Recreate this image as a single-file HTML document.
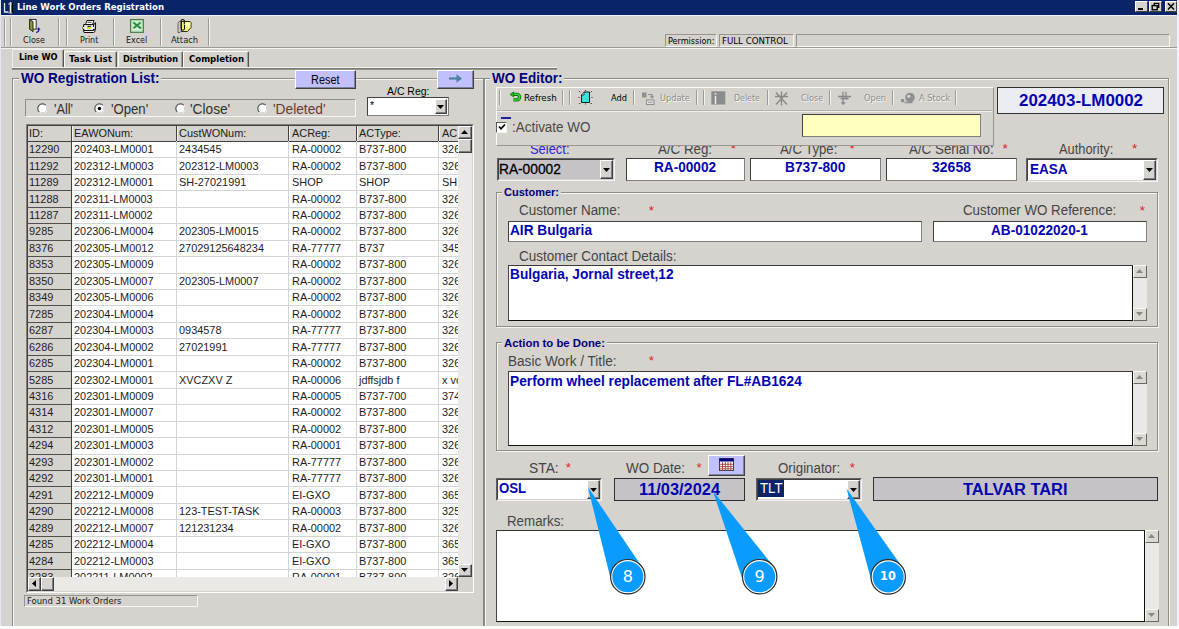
<!DOCTYPE html>
<html lang="en"><head><meta charset="utf-8"><title>Line Work Orders Registration</title>
<style>
html,body{margin:0;padding:0;}
body{width:1179px;height:629px;overflow:hidden;background:#d6d3ce;position:relative;font-family:"Liberation Sans",sans-serif;}
div,span,svg{position:absolute;box-sizing:border-box;}
span{white-space:pre;transform-origin:0 0;}
.sk{border:1px solid;border-color:#96948f #f8f8f6 #f8f8f6 #96948f;}
.rs{border:1px solid;border-color:#fff #808080 #808080 #fff;}
.et{border:1px solid #8e8c88;box-shadow:1px 1px 0 #f6f5f3, inset 1px 1px 0 #f6f5f3;}
.fld{border:1px solid;border-color:#404040 #808080 #808080 #404040;background:#fff;}
.btn{background:#d6d3ce;border:1px solid;border-color:#fff #404040 #404040 #fff;box-shadow:inset -1px -1px 0 #808080;}
.vs{width:1px;border-left:1px solid #808080;border-right:1px solid #fff;width:2px;}
</style></head><body>
<div style="left:0px;top:0px;width:1179px;height:15px;background:#0a246a;"></div>
<div style="left:0px;top:15px;width:1179px;height:1px;background:#f0f4fa;"></div>
<div style="left:0px;top:0px;width:1px;height:629px;background:#dfe3ee;"></div>
<div style="left:1177px;top:0px;width:2px;height:629px;background:#eef0f6;"></div>
<svg style="left:2px;top:1px" width="13" height="13" viewBox="0 0 13 13"><rect x="1" y="1" width="11" height="11" fill="#0a246a"/><path d="M2.5 2v9h4" stroke="#e8e8e8" stroke-width="1.3" fill="none"/><path d="M8.5 1v11" stroke="#f0f0f0" stroke-width="1.6"/><path d="M6 3h5M6.5 12h4" stroke="#c0c0c0" stroke-width="1"/><path d="M10.5 2v10" stroke="#000" stroke-width="1"/></svg>
<span style="left:17.00px;top:2.79px;font-size:9.00px;line-height:9.00px;color:#fff;font-family:'DejaVu Sans','Liberation Sans',sans-serif;font-weight:bold;transform:scaleX(0.9540);">Line Work Orders Registration</span>
<div style="left:1135px;top:1px;width:13px;height:11px;background:#d6d3ce;border:1px solid;border-color:#fff #404040 #404040 #fff;"></div>
<div style="left:1138px;top:8px;width:5px;height:2px;background:#000;"></div>
<div style="left:1149px;top:1px;width:13px;height:11px;background:#d6d3ce;border:1px solid;border-color:#fff #404040 #404040 #fff;"></div>
<svg style="left:1149px;top:1px" width="13" height="11" viewBox="0 0 13 11"><path d="M5.3 2.400h4.400v4h-1.300M5.300 2v2" stroke="#000" stroke-width="1.4" fill="none"/><rect x="3.2" y="4.6" width="5" height="4.2" stroke="#000" stroke-width="1.4" fill="none"/></svg>
<div style="left:1165px;top:1px;width:12px;height:11px;background:#d6d3ce;border:1px solid;border-color:#fff #404040 #404040 #fff;"></div>
<svg style="left:1165px;top:1px" width="12" height="11" viewBox="0 0 12 11"><path d="M3 2.200l6 6.200M9 2.200l-6 6.200" stroke="#000" stroke-width="1.5" fill="none"/></svg>
<div style="left:3.5px;top:18px;width:2px;height:28px;border-left:1px solid #9c9a94;border-right:1px solid #f4f3f0;"></div>
<div style="left:10.2px;top:18px;width:2px;height:28px;border-left:1px solid #9c9a94;border-right:1px solid #f4f3f0;"></div>
<div style="left:58px;top:18px;width:2px;height:28px;border-left:1px solid #9c9a94;border-right:1px solid #f4f3f0;"></div>
<div style="left:65.5px;top:18px;width:2px;height:28px;border-left:1px solid #9c9a94;border-right:1px solid #f4f3f0;"></div>
<div style="left:112.5px;top:18px;width:2px;height:28px;border-left:1px solid #9c9a94;border-right:1px solid #f4f3f0;"></div>
<div style="left:160px;top:18px;width:2px;height:28px;border-left:1px solid #9c9a94;border-right:1px solid #f4f3f0;"></div>
<div style="left:208px;top:18px;width:2px;height:28px;border-left:1px solid #9c9a94;border-right:1px solid #f4f3f0;"></div>
<div style="left:1px;top:46.7px;width:1176px;height:2px;border-top:1px solid #9c9a94;border-bottom:1px solid #f4f3f0;"></div>
<span style="left:23.00px;top:35.90px;font-size:9.10px;line-height:9.10px;color:#181818;font-family:'DejaVu Sans Condensed','DejaVu Sans',sans-serif;transform:scaleX(0.9908);">Close</span>
<span style="left:79.70px;top:35.90px;font-size:9.10px;line-height:9.10px;color:#181818;font-family:'DejaVu Sans Condensed','DejaVu Sans',sans-serif;transform:scaleX(0.9727);">Print</span>
<span style="left:126.00px;top:35.90px;font-size:9.10px;line-height:9.10px;color:#181818;font-family:'DejaVu Sans Condensed','DejaVu Sans',sans-serif;transform:scaleX(0.9829);">Excel</span>
<span style="left:170.50px;top:35.90px;font-size:9.10px;line-height:9.10px;color:#181818;font-family:'DejaVu Sans Condensed','DejaVu Sans',sans-serif;transform:scaleX(1.0240);">Attach</span>
<svg style="left:0;top:16px" width="220" height="20" viewBox="0 16 220 20"><path d="M29.6 19.4h6.600v9.800h-6.600z" fill="#fcfcf8" stroke="#2a2a2a" stroke-width="1"/><path d="M29.600 19.400l3.400 2.300v10l-3.400-2.600z" fill="#8c9c1c" stroke="#2a2a2a" stroke-width="1"/><path d="M36 32.300c2.300 0 3-1.200 2.600-3.300" fill="none" stroke="#2018a0" stroke-width="1.300"/><path d="M36.700 29.600l2-2.300 1.900 2.500z" fill="#2018a0"/><path d="M85.500 24.500l1.500-4h7l-1.500 4z" fill="#fff" stroke="#101010" stroke-width="1"/><path d="M87.500 22.300h4" stroke="#303030" stroke-width=".9"/><path d="M84 24.500h9.500l2-1.500v6l-2 1.500h-9.500q-1.700-3 0-6z" fill="#e4e4e4" stroke="#101010" stroke-width="1.100"/><path d="M93.500 24.500v6" stroke="#101010" stroke-width="1"/><rect x="83" y="27" width="11" height="1.800" fill="#f4f4f4"/><rect x="87" y="26.800" width="3.600" height="2" fill="#c8e000"/><path d="M87.500 26.300h3.500" stroke="#101010" stroke-width="1"/><path d="M83.500 30.500h10l1.500-1v2l-1.500 1h-9.500z" fill="#fff" stroke="#101010" stroke-width="1"/><rect x="130.600" y="19.600" width="12.700" height="12.700" fill="#d8f8d8" stroke="#4c7c4c" stroke-width="1.300"/><rect x="132" y="21" width="9.900" height="9.900" fill="none" stroke="#a8d8a8" stroke-width=".8"/><path d="M133.300 22.500l7.600 5.800M140.500 22.500l-7 5.800" stroke="#2c9040" stroke-width="2.100"/><path d="M178 22.500l1.500-1h2v9.500l-1.500 1.500h-2z" fill="#c8c8b8" stroke="#505040" stroke-width=".8"/><path d="M181.500 21.500h8.500l1 1v5l-3.500 4h-6z" fill="#f8f870" stroke="#282820" stroke-width="1"/><path d="M185 24h5.500M185 26.200h5.500" stroke="#fcfcd0" stroke-width="1.300"/><path d="M184.300 24.500v-4.200q-1.600-1.700-3.200 0v8.700q1.600 2.400 3.400 0v-4" fill="none" stroke="#101010" stroke-width="1.100"/></svg>
<div class="sk" style="left:664.5px;top:34px;width:52px;height:13px;"></div>
<div class="sk" style="left:719px;top:34px;width:75px;height:13px;"></div>
<div class="sk" style="left:796px;top:34px;width:373.5px;height:13px;"></div>
<span style="left:667.50px;top:36.97px;font-size:8.90px;line-height:8.90px;color:#000;font-family:'DejaVu Sans Condensed','DejaVu Sans',sans-serif;transform:scaleX(1.0144);">Permission:</span>
<span style="left:722.00px;top:36.97px;font-size:8.90px;line-height:8.90px;color:#000;font-family:'DejaVu Sans Condensed','DejaVu Sans',sans-serif;transform:scaleX(1.0816);">FULL CONTROL</span>
<div style="left:64.3px;top:50.6px;width:53.2px;height:18px;border:1px solid;border-color:#fbfbfa #55534e transparent #fbfbfa;border-bottom:0;border-radius:2px 2px 0 0;box-shadow:inset -1px 0 0 #a09e98;"></div>
<div style="left:117.8px;top:50.6px;width:65.2px;height:18px;border:1px solid;border-color:#fbfbfa #55534e transparent #fbfbfa;border-bottom:0;border-radius:2px 2px 0 0;box-shadow:inset -1px 0 0 #a09e98;"></div>
<div style="left:183.3px;top:50.6px;width:65.7px;height:18px;border:1px solid;border-color:#fbfbfa #55534e transparent #fbfbfa;border-bottom:0;border-radius:2px 2px 0 0;box-shadow:inset -1px 0 0 #a09e98;"></div>
<div style="left:12.3px;top:49px;width:51.7px;height:19.5px;background:#d6d3ce;border:1px solid;border-color:#f0efec #55534e transparent #f0efec;border-bottom:0;border-radius:2px 2px 0 0;box-shadow:inset -1px 0 0 #a09e98;"></div>
<div style="left:12px;top:67px;width:545px;height:1px;background:#f2f1ee;"></div>
<div style="left:12px;top:68px;width:545px;height:1px;background:#7c7a76;"></div>
<div style="left:12px;top:69px;width:545px;height:1px;background:#94928e;"></div>
<span style="left:18.50px;top:53.09px;font-size:9.00px;line-height:9.00px;color:#000;font-family:'DejaVu Sans','Liberation Sans',sans-serif;font-weight:bold;transform:scaleX(0.9157);">Line WO</span>
<span style="left:68.50px;top:54.99px;font-size:9.00px;line-height:9.00px;color:#000;font-family:'DejaVu Sans','Liberation Sans',sans-serif;font-weight:bold;transform:scaleX(0.9771);">Task List</span>
<span style="left:122.50px;top:54.99px;font-size:9.00px;line-height:9.00px;color:#000;font-family:'DejaVu Sans','Liberation Sans',sans-serif;font-weight:bold;transform:scaleX(0.9081);">Distribution</span>
<span style="left:188.50px;top:54.99px;font-size:9.00px;line-height:9.00px;color:#000;font-family:'DejaVu Sans','Liberation Sans',sans-serif;font-weight:bold;transform:scaleX(0.9520);">Completion</span>
<div class="et" style="left:12px;top:78px;width:472px;height:560px;"></div>
<div style="left:18.5px;top:77px;width:142px;height:4px;background:#d6d3ce;"></div>
<span style="left:20.50px;top:70.60px;font-size:14.30px;line-height:14.30px;color:#000080;font-weight:bold;transform:scaleX(0.9475);">WO Registration List:</span>
<div style="left:295px;top:70px;width:61px;height:18.6px;background:#c0c0ff;border:1px solid;border-color:#fff #404040 #404040 #fff;box-shadow:inset -1px -1px 0 #8080a0;"></div>
<span style="left:311.00px;top:73.84px;font-size:12.00px;line-height:12.00px;color:#000;transform:scaleX(0.9092);">Reset</span>
<div style="left:437px;top:70px;width:37px;height:18.6px;background:#c0c0ff;border:1px solid;border-color:#fff #404040 #404040 #fff;box-shadow:inset -1px -1px 0 #8080a0;"></div>
<svg style="left:448px;top:73px" width="16" height="11" viewBox="0 0 16 11"><path d="M1 5.5h9" stroke="#5080a0" stroke-width="2.2"/><path d="M8.5 1.2l5.5 4.3-5.5 4.3z" fill="#5080a0"/></svg>
<div class="sk" style="left:24.5px;top:99px;width:331px;height:18px;border-color:#908e88 #f8f8f6 #f8f8f6 #908e88;"></div>
<svg style="left:37px;top:102.5px" width="11" height="11" viewBox="0 0 11 11"><circle cx="5.5" cy="5.5" r="4.6" fill="#fff" stroke="#808080" stroke-width="1"/><path d="M2.2 8.8A4.6 4.6 0 0 1 8.8 2.2" fill="none" stroke="#606060" stroke-width="1.1"/><path d="M8.8 2.2A4.6 4.6 0 0 1 2.2 8.8" fill="none" stroke="#f4f4f4" stroke-width="1.1"/></svg>
<svg style="left:94.3px;top:102.5px" width="11" height="11" viewBox="0 0 11 11"><circle cx="5.5" cy="5.5" r="4.6" fill="#fff" stroke="#808080" stroke-width="1"/><path d="M2.2 8.8A4.6 4.6 0 0 1 8.8 2.2" fill="none" stroke="#606060" stroke-width="1.1"/><path d="M8.8 2.2A4.6 4.6 0 0 1 2.2 8.8" fill="none" stroke="#f4f4f4" stroke-width="1.1"/><circle cx="5.5" cy="5.5" r="1.7" fill="#000"/></svg>
<svg style="left:175.3px;top:102.5px" width="11" height="11" viewBox="0 0 11 11"><circle cx="5.5" cy="5.5" r="4.6" fill="#fff" stroke="#808080" stroke-width="1"/><path d="M2.2 8.8A4.6 4.6 0 0 1 8.8 2.2" fill="none" stroke="#606060" stroke-width="1.1"/><path d="M8.8 2.2A4.6 4.6 0 0 1 2.2 8.8" fill="none" stroke="#f4f4f4" stroke-width="1.1"/></svg>
<svg style="left:257px;top:102.5px" width="11" height="11" viewBox="0 0 11 11"><circle cx="5.5" cy="5.5" r="4.6" fill="#fff" stroke="#808080" stroke-width="1"/><path d="M2.2 8.8A4.6 4.6 0 0 1 8.8 2.2" fill="none" stroke="#606060" stroke-width="1.1"/><path d="M8.8 2.2A4.6 4.6 0 0 1 2.2 8.8" fill="none" stroke="#f4f4f4" stroke-width="1.1"/></svg>
<span style="left:53.60px;top:101.55px;font-size:14.00px;line-height:14.00px;color:#303030;transform:scaleX(0.9089);">&#x27;All&#x27;</span>
<span style="left:110.80px;top:101.55px;font-size:14.00px;line-height:14.00px;color:#303030;transform:scaleX(0.9395);">&#x27;Open&#x27;</span>
<span style="left:190.30px;top:101.55px;font-size:14.00px;line-height:14.00px;color:#303030;transform:scaleX(0.9772);">&#x27;Close&#x27;</span>
<span style="left:272.80px;top:101.55px;font-size:14.00px;line-height:14.00px;color:#6c3838;transform:scaleX(0.9795);">&#x27;Deleted&#x27;</span>
<span style="left:386.50px;top:85.89px;font-size:11.00px;line-height:11.00px;color:#000;transform:scaleX(0.9523);">A/C Reg:</span>
<div class="fld" style="left:367px;top:97px;width:81.5px;height:18.6px;"></div>
<span style="left:369.80px;top:99.99px;font-size:11.00px;line-height:11.00px;color:#000;transform:scaleX(0.9550);">*</span>
<div style="left:434.5px;top:99px;width:12.5px;height:14.5px;background:#d6d3ce;border:1px solid;border-color:#fff #404040 #404040 #fff;box-shadow:inset -1px -1px 0 #808080;"></div>
<svg style="left:437.25px;top:104.75px" width="7" height="4" viewBox="0 0 7 4"><path d="M0 0h7l-3.5 4z" fill="#000"/></svg>
<div style="left:26px;top:124px;width:448px;height:469px;background:#fff;border:1px solid;border-color:#808080 #fff #fff #808080;"></div>
<div style="left:27px;top:125px;width:446px;height:467px;border:1px solid;border-color:#404040 #d6d3ce #d6d3ce #404040;"></div>
<div style="left:0;top:0;width:458.2px;height:577px;overflow:hidden;">
<div style="left:27.5px;top:125.5px;width:430.7px;height:16.4px;background:#d6d3ce;border-bottom:1px solid #404040;"></div>
<div style="left:27.5px;top:142.4px;width:44px;height:435.6px;background:#d6d3ce;border-right:1px solid #404040;"></div>
<div style="left:72px;top:157.355px;width:386.2px;height:1px;background:#d4d4d4;"></div>
<div style="left:27.5px;top:157.355px;width:43.5px;height:1px;background:#505050;"></div>
<div style="left:72px;top:173.81px;width:386.2px;height:1px;background:#d4d4d4;"></div>
<div style="left:27.5px;top:173.81px;width:43.5px;height:1px;background:#505050;"></div>
<div style="left:72px;top:190.265px;width:386.2px;height:1px;background:#d4d4d4;"></div>
<div style="left:27.5px;top:190.265px;width:43.5px;height:1px;background:#505050;"></div>
<div style="left:72px;top:206.72px;width:386.2px;height:1px;background:#d4d4d4;"></div>
<div style="left:27.5px;top:206.72px;width:43.5px;height:1px;background:#505050;"></div>
<div style="left:72px;top:223.175px;width:386.2px;height:1px;background:#d4d4d4;"></div>
<div style="left:27.5px;top:223.175px;width:43.5px;height:1px;background:#505050;"></div>
<div style="left:72px;top:239.63px;width:386.2px;height:1px;background:#d4d4d4;"></div>
<div style="left:27.5px;top:239.63px;width:43.5px;height:1px;background:#505050;"></div>
<div style="left:72px;top:256.085px;width:386.2px;height:1px;background:#d4d4d4;"></div>
<div style="left:27.5px;top:256.085px;width:43.5px;height:1px;background:#505050;"></div>
<div style="left:72px;top:272.54px;width:386.2px;height:1px;background:#d4d4d4;"></div>
<div style="left:27.5px;top:272.54px;width:43.5px;height:1px;background:#505050;"></div>
<div style="left:72px;top:288.995px;width:386.2px;height:1px;background:#d4d4d4;"></div>
<div style="left:27.5px;top:288.995px;width:43.5px;height:1px;background:#505050;"></div>
<div style="left:72px;top:305.45px;width:386.2px;height:1px;background:#d4d4d4;"></div>
<div style="left:27.5px;top:305.45px;width:43.5px;height:1px;background:#505050;"></div>
<div style="left:72px;top:321.905px;width:386.2px;height:1px;background:#d4d4d4;"></div>
<div style="left:27.5px;top:321.905px;width:43.5px;height:1px;background:#505050;"></div>
<div style="left:72px;top:338.36px;width:386.2px;height:1px;background:#d4d4d4;"></div>
<div style="left:27.5px;top:338.36px;width:43.5px;height:1px;background:#505050;"></div>
<div style="left:72px;top:354.815px;width:386.2px;height:1px;background:#d4d4d4;"></div>
<div style="left:27.5px;top:354.815px;width:43.5px;height:1px;background:#505050;"></div>
<div style="left:72px;top:371.27px;width:386.2px;height:1px;background:#d4d4d4;"></div>
<div style="left:27.5px;top:371.27px;width:43.5px;height:1px;background:#505050;"></div>
<div style="left:72px;top:387.725px;width:386.2px;height:1px;background:#d4d4d4;"></div>
<div style="left:27.5px;top:387.725px;width:43.5px;height:1px;background:#505050;"></div>
<div style="left:72px;top:404.18px;width:386.2px;height:1px;background:#d4d4d4;"></div>
<div style="left:27.5px;top:404.18px;width:43.5px;height:1px;background:#505050;"></div>
<div style="left:72px;top:420.635px;width:386.2px;height:1px;background:#d4d4d4;"></div>
<div style="left:27.5px;top:420.635px;width:43.5px;height:1px;background:#505050;"></div>
<div style="left:72px;top:437.09px;width:386.2px;height:1px;background:#d4d4d4;"></div>
<div style="left:27.5px;top:437.09px;width:43.5px;height:1px;background:#505050;"></div>
<div style="left:72px;top:453.545px;width:386.2px;height:1px;background:#d4d4d4;"></div>
<div style="left:27.5px;top:453.545px;width:43.5px;height:1px;background:#505050;"></div>
<div style="left:72px;top:470px;width:386.2px;height:1px;background:#d4d4d4;"></div>
<div style="left:27.5px;top:470px;width:43.5px;height:1px;background:#505050;"></div>
<div style="left:72px;top:486.455px;width:386.2px;height:1px;background:#d4d4d4;"></div>
<div style="left:27.5px;top:486.455px;width:43.5px;height:1px;background:#505050;"></div>
<div style="left:72px;top:502.91px;width:386.2px;height:1px;background:#d4d4d4;"></div>
<div style="left:27.5px;top:502.91px;width:43.5px;height:1px;background:#505050;"></div>
<div style="left:72px;top:519.365px;width:386.2px;height:1px;background:#d4d4d4;"></div>
<div style="left:27.5px;top:519.365px;width:43.5px;height:1px;background:#505050;"></div>
<div style="left:72px;top:535.82px;width:386.2px;height:1px;background:#d4d4d4;"></div>
<div style="left:27.5px;top:535.82px;width:43.5px;height:1px;background:#505050;"></div>
<div style="left:72px;top:552.275px;width:386.2px;height:1px;background:#d4d4d4;"></div>
<div style="left:27.5px;top:552.275px;width:43.5px;height:1px;background:#505050;"></div>
<div style="left:72px;top:568.73px;width:386.2px;height:1px;background:#d4d4d4;"></div>
<div style="left:27.5px;top:568.73px;width:43.5px;height:1px;background:#505050;"></div>
<div style="left:72px;top:585.185px;width:386.2px;height:1px;background:#d4d4d4;"></div>
<div style="left:27.5px;top:585.185px;width:43.5px;height:1px;background:#505050;"></div>
<div style="left:175.5px;top:141.4px;width:1px;height:435.6px;background:#d4d4d4;"></div>
<div style="left:175.5px;top:125.5px;width:1px;height:15.9px;background:#404040;"></div>
<div style="left:176.5px;top:125.5px;width:1px;height:15.9px;background:#f4f4f4;"></div>
<div style="left:287.8px;top:141.4px;width:1px;height:435.6px;background:#d4d4d4;"></div>
<div style="left:287.8px;top:125.5px;width:1px;height:15.9px;background:#404040;"></div>
<div style="left:288.8px;top:125.5px;width:1px;height:15.9px;background:#f4f4f4;"></div>
<div style="left:355.5px;top:141.4px;width:1px;height:435.6px;background:#d4d4d4;"></div>
<div style="left:355.5px;top:125.5px;width:1px;height:15.9px;background:#404040;"></div>
<div style="left:356.5px;top:125.5px;width:1px;height:15.9px;background:#f4f4f4;"></div>
<div style="left:438.1px;top:141.4px;width:1px;height:435.6px;background:#d4d4d4;"></div>
<div style="left:438.1px;top:125.5px;width:1px;height:15.9px;background:#404040;"></div>
<div style="left:439.1px;top:125.5px;width:1px;height:15.9px;background:#f4f4f4;"></div>
<div style="left:70.5px;top:125.5px;width:1px;height:15.9px;background:#404040;"></div>
<div style="left:71.5px;top:125.5px;width:1px;height:15.9px;background:#f4f4f4;"></div>
<span style="left:28.50px;top:127.89px;font-size:11.00px;line-height:11.00px;color:#202020;transform:scaleX(0.9920);">ID:</span>
<span style="left:73.60px;top:127.89px;font-size:11.00px;line-height:11.00px;color:#202020;transform:scaleX(0.9920);">EAWONum:</span>
<span style="left:178.70px;top:127.89px;font-size:11.00px;line-height:11.00px;color:#202020;transform:scaleX(0.9920);">CustWONum:</span>
<span style="left:291.80px;top:127.89px;font-size:11.00px;line-height:11.00px;color:#202020;transform:scaleX(0.9920);">ACReg:</span>
<span style="left:359.20px;top:127.89px;font-size:11.00px;line-height:11.00px;color:#202020;transform:scaleX(0.9920);">ACType:</span>
<span style="left:441.80px;top:127.89px;font-size:11.00px;line-height:11.00px;color:#202020;transform:scaleX(0.9920);">AC</span>
<span style="left:28.50px;top:144.19px;font-size:11.00px;line-height:11.00px;color:#1c1c1c;transform:scaleX(0.9920);">12290</span>
<span style="left:73.60px;top:144.19px;font-size:11.00px;line-height:11.00px;color:#1c1c1c;transform:scaleX(0.9920);">202403-LM0001</span>
<span style="left:178.70px;top:144.19px;font-size:11.00px;line-height:11.00px;color:#1c1c1c;transform:scaleX(0.9920);">2434545</span>
<span style="left:291.80px;top:144.19px;font-size:11.00px;line-height:11.00px;color:#1c1c1c;transform:scaleX(0.9920);">RA-00002</span>
<span style="left:359.20px;top:144.19px;font-size:11.00px;line-height:11.00px;color:#1c1c1c;transform:scaleX(0.9920);">B737-800</span>
<span style="left:441.80px;top:144.19px;font-size:11.00px;line-height:11.00px;color:#1c1c1c;transform:scaleX(0.9920);">326</span>
<span style="left:28.50px;top:160.64px;font-size:11.00px;line-height:11.00px;color:#1c1c1c;transform:scaleX(0.9920);">11292</span>
<span style="left:73.60px;top:160.64px;font-size:11.00px;line-height:11.00px;color:#1c1c1c;transform:scaleX(0.9920);">202312-LM0003</span>
<span style="left:178.70px;top:160.64px;font-size:11.00px;line-height:11.00px;color:#1c1c1c;transform:scaleX(0.9920);">202312-LM0003</span>
<span style="left:291.80px;top:160.64px;font-size:11.00px;line-height:11.00px;color:#1c1c1c;transform:scaleX(0.9920);">RA-00002</span>
<span style="left:359.20px;top:160.64px;font-size:11.00px;line-height:11.00px;color:#1c1c1c;transform:scaleX(0.9920);">B737-800</span>
<span style="left:441.80px;top:160.64px;font-size:11.00px;line-height:11.00px;color:#1c1c1c;transform:scaleX(0.9920);">326</span>
<span style="left:28.50px;top:177.10px;font-size:11.00px;line-height:11.00px;color:#1c1c1c;transform:scaleX(0.9920);">11289</span>
<span style="left:73.60px;top:177.10px;font-size:11.00px;line-height:11.00px;color:#1c1c1c;transform:scaleX(0.9920);">202312-LM0001</span>
<span style="left:178.70px;top:177.10px;font-size:11.00px;line-height:11.00px;color:#1c1c1c;transform:scaleX(0.9920);">SH-27021991</span>
<span style="left:291.80px;top:177.10px;font-size:11.00px;line-height:11.00px;color:#1c1c1c;transform:scaleX(0.9920);">SHOP</span>
<span style="left:359.20px;top:177.10px;font-size:11.00px;line-height:11.00px;color:#1c1c1c;transform:scaleX(0.9920);">SHOP</span>
<span style="left:441.80px;top:177.10px;font-size:11.00px;line-height:11.00px;color:#1c1c1c;transform:scaleX(0.9920);">SH</span>
<span style="left:28.50px;top:193.55px;font-size:11.00px;line-height:11.00px;color:#1c1c1c;transform:scaleX(0.9920);">11288</span>
<span style="left:73.60px;top:193.55px;font-size:11.00px;line-height:11.00px;color:#1c1c1c;transform:scaleX(0.9920);">202311-LM0003</span>
<span style="left:291.80px;top:193.55px;font-size:11.00px;line-height:11.00px;color:#1c1c1c;transform:scaleX(0.9920);">RA-00002</span>
<span style="left:359.20px;top:193.55px;font-size:11.00px;line-height:11.00px;color:#1c1c1c;transform:scaleX(0.9920);">B737-800</span>
<span style="left:441.80px;top:193.55px;font-size:11.00px;line-height:11.00px;color:#1c1c1c;transform:scaleX(0.9920);">326</span>
<span style="left:28.50px;top:210.01px;font-size:11.00px;line-height:11.00px;color:#1c1c1c;transform:scaleX(0.9920);">11287</span>
<span style="left:73.60px;top:210.01px;font-size:11.00px;line-height:11.00px;color:#1c1c1c;transform:scaleX(0.9920);">202311-LM0002</span>
<span style="left:291.80px;top:210.01px;font-size:11.00px;line-height:11.00px;color:#1c1c1c;transform:scaleX(0.9920);">RA-00002</span>
<span style="left:359.20px;top:210.01px;font-size:11.00px;line-height:11.00px;color:#1c1c1c;transform:scaleX(0.9920);">B737-800</span>
<span style="left:441.80px;top:210.01px;font-size:11.00px;line-height:11.00px;color:#1c1c1c;transform:scaleX(0.9920);">326</span>
<span style="left:28.50px;top:226.46px;font-size:11.00px;line-height:11.00px;color:#1c1c1c;transform:scaleX(0.9920);">9285</span>
<span style="left:73.60px;top:226.46px;font-size:11.00px;line-height:11.00px;color:#1c1c1c;transform:scaleX(0.9920);">202306-LM0004</span>
<span style="left:178.70px;top:226.46px;font-size:11.00px;line-height:11.00px;color:#1c1c1c;transform:scaleX(0.9920);">202305-LM0015</span>
<span style="left:291.80px;top:226.46px;font-size:11.00px;line-height:11.00px;color:#1c1c1c;transform:scaleX(0.9920);">RA-00002</span>
<span style="left:359.20px;top:226.46px;font-size:11.00px;line-height:11.00px;color:#1c1c1c;transform:scaleX(0.9920);">B737-800</span>
<span style="left:441.80px;top:226.46px;font-size:11.00px;line-height:11.00px;color:#1c1c1c;transform:scaleX(0.9920);">326</span>
<span style="left:28.50px;top:242.92px;font-size:11.00px;line-height:11.00px;color:#1c1c1c;transform:scaleX(0.9920);">8376</span>
<span style="left:73.60px;top:242.92px;font-size:11.00px;line-height:11.00px;color:#1c1c1c;transform:scaleX(0.9920);">202305-LM0012</span>
<span style="left:178.70px;top:242.92px;font-size:11.00px;line-height:11.00px;color:#1c1c1c;transform:scaleX(0.9920);">27029125648234</span>
<span style="left:291.80px;top:242.92px;font-size:11.00px;line-height:11.00px;color:#1c1c1c;transform:scaleX(0.9920);">RA-77777</span>
<span style="left:359.20px;top:242.92px;font-size:11.00px;line-height:11.00px;color:#1c1c1c;transform:scaleX(0.9920);">B737</span>
<span style="left:441.80px;top:242.92px;font-size:11.00px;line-height:11.00px;color:#1c1c1c;transform:scaleX(0.9920);">345</span>
<span style="left:28.50px;top:259.37px;font-size:11.00px;line-height:11.00px;color:#1c1c1c;transform:scaleX(0.9920);">8353</span>
<span style="left:73.60px;top:259.37px;font-size:11.00px;line-height:11.00px;color:#1c1c1c;transform:scaleX(0.9920);">202305-LM0009</span>
<span style="left:291.80px;top:259.37px;font-size:11.00px;line-height:11.00px;color:#1c1c1c;transform:scaleX(0.9920);">RA-00002</span>
<span style="left:359.20px;top:259.37px;font-size:11.00px;line-height:11.00px;color:#1c1c1c;transform:scaleX(0.9920);">B737-800</span>
<span style="left:441.80px;top:259.37px;font-size:11.00px;line-height:11.00px;color:#1c1c1c;transform:scaleX(0.9920);">326</span>
<span style="left:28.50px;top:275.83px;font-size:11.00px;line-height:11.00px;color:#1c1c1c;transform:scaleX(0.9920);">8350</span>
<span style="left:73.60px;top:275.83px;font-size:11.00px;line-height:11.00px;color:#1c1c1c;transform:scaleX(0.9920);">202305-LM0007</span>
<span style="left:178.70px;top:275.83px;font-size:11.00px;line-height:11.00px;color:#1c1c1c;transform:scaleX(0.9920);">202305-LM0007</span>
<span style="left:291.80px;top:275.83px;font-size:11.00px;line-height:11.00px;color:#1c1c1c;transform:scaleX(0.9920);">RA-00002</span>
<span style="left:359.20px;top:275.83px;font-size:11.00px;line-height:11.00px;color:#1c1c1c;transform:scaleX(0.9920);">B737-800</span>
<span style="left:441.80px;top:275.83px;font-size:11.00px;line-height:11.00px;color:#1c1c1c;transform:scaleX(0.9920);">326</span>
<span style="left:28.50px;top:292.28px;font-size:11.00px;line-height:11.00px;color:#1c1c1c;transform:scaleX(0.9920);">8349</span>
<span style="left:73.60px;top:292.28px;font-size:11.00px;line-height:11.00px;color:#1c1c1c;transform:scaleX(0.9920);">202305-LM0006</span>
<span style="left:291.80px;top:292.28px;font-size:11.00px;line-height:11.00px;color:#1c1c1c;transform:scaleX(0.9920);">RA-00002</span>
<span style="left:359.20px;top:292.28px;font-size:11.00px;line-height:11.00px;color:#1c1c1c;transform:scaleX(0.9920);">B737-800</span>
<span style="left:441.80px;top:292.28px;font-size:11.00px;line-height:11.00px;color:#1c1c1c;transform:scaleX(0.9920);">326</span>
<span style="left:28.50px;top:308.74px;font-size:11.00px;line-height:11.00px;color:#1c1c1c;transform:scaleX(0.9920);">7285</span>
<span style="left:73.60px;top:308.74px;font-size:11.00px;line-height:11.00px;color:#1c1c1c;transform:scaleX(0.9920);">202304-LM0004</span>
<span style="left:291.80px;top:308.74px;font-size:11.00px;line-height:11.00px;color:#1c1c1c;transform:scaleX(0.9920);">RA-00002</span>
<span style="left:359.20px;top:308.74px;font-size:11.00px;line-height:11.00px;color:#1c1c1c;transform:scaleX(0.9920);">B737-800</span>
<span style="left:441.80px;top:308.74px;font-size:11.00px;line-height:11.00px;color:#1c1c1c;transform:scaleX(0.9920);">326</span>
<span style="left:28.50px;top:325.19px;font-size:11.00px;line-height:11.00px;color:#1c1c1c;transform:scaleX(0.9920);">6287</span>
<span style="left:73.60px;top:325.19px;font-size:11.00px;line-height:11.00px;color:#1c1c1c;transform:scaleX(0.9920);">202304-LM0003</span>
<span style="left:178.70px;top:325.19px;font-size:11.00px;line-height:11.00px;color:#1c1c1c;transform:scaleX(0.9920);">0934578</span>
<span style="left:291.80px;top:325.19px;font-size:11.00px;line-height:11.00px;color:#1c1c1c;transform:scaleX(0.9920);">RA-77777</span>
<span style="left:359.20px;top:325.19px;font-size:11.00px;line-height:11.00px;color:#1c1c1c;transform:scaleX(0.9920);">B737-800</span>
<span style="left:441.80px;top:325.19px;font-size:11.00px;line-height:11.00px;color:#1c1c1c;transform:scaleX(0.9920);">326</span>
<span style="left:28.50px;top:341.65px;font-size:11.00px;line-height:11.00px;color:#1c1c1c;transform:scaleX(0.9920);">6286</span>
<span style="left:73.60px;top:341.65px;font-size:11.00px;line-height:11.00px;color:#1c1c1c;transform:scaleX(0.9920);">202304-LM0002</span>
<span style="left:178.70px;top:341.65px;font-size:11.00px;line-height:11.00px;color:#1c1c1c;transform:scaleX(0.9920);">27021991</span>
<span style="left:291.80px;top:341.65px;font-size:11.00px;line-height:11.00px;color:#1c1c1c;transform:scaleX(0.9920);">RA-77777</span>
<span style="left:359.20px;top:341.65px;font-size:11.00px;line-height:11.00px;color:#1c1c1c;transform:scaleX(0.9920);">B737-800</span>
<span style="left:441.80px;top:341.65px;font-size:11.00px;line-height:11.00px;color:#1c1c1c;transform:scaleX(0.9920);">326</span>
<span style="left:28.50px;top:358.10px;font-size:11.00px;line-height:11.00px;color:#1c1c1c;transform:scaleX(0.9920);">6285</span>
<span style="left:73.60px;top:358.10px;font-size:11.00px;line-height:11.00px;color:#1c1c1c;transform:scaleX(0.9920);">202304-LM0001</span>
<span style="left:291.80px;top:358.10px;font-size:11.00px;line-height:11.00px;color:#1c1c1c;transform:scaleX(0.9920);">RA-00002</span>
<span style="left:359.20px;top:358.10px;font-size:11.00px;line-height:11.00px;color:#1c1c1c;transform:scaleX(0.9920);">B737-800</span>
<span style="left:441.80px;top:358.10px;font-size:11.00px;line-height:11.00px;color:#1c1c1c;transform:scaleX(0.9920);">326</span>
<span style="left:28.50px;top:374.56px;font-size:11.00px;line-height:11.00px;color:#1c1c1c;transform:scaleX(0.9920);">5285</span>
<span style="left:73.60px;top:374.56px;font-size:11.00px;line-height:11.00px;color:#1c1c1c;transform:scaleX(0.9920);">202302-LM0001</span>
<span style="left:178.70px;top:374.56px;font-size:11.00px;line-height:11.00px;color:#1c1c1c;transform:scaleX(0.9920);">XVCZXV Z</span>
<span style="left:291.80px;top:374.56px;font-size:11.00px;line-height:11.00px;color:#1c1c1c;transform:scaleX(0.9920);">RA-00006</span>
<span style="left:359.20px;top:374.56px;font-size:11.00px;line-height:11.00px;color:#1c1c1c;transform:scaleX(0.9920);">jdffsjdb f</span>
<span style="left:441.80px;top:374.56px;font-size:11.00px;line-height:11.00px;color:#1c1c1c;transform:scaleX(0.9920);">x vc</span>
<span style="left:28.50px;top:391.01px;font-size:11.00px;line-height:11.00px;color:#1c1c1c;transform:scaleX(0.9920);">4316</span>
<span style="left:73.60px;top:391.01px;font-size:11.00px;line-height:11.00px;color:#1c1c1c;transform:scaleX(0.9920);">202301-LM0009</span>
<span style="left:291.80px;top:391.01px;font-size:11.00px;line-height:11.00px;color:#1c1c1c;transform:scaleX(0.9920);">RA-00005</span>
<span style="left:359.20px;top:391.01px;font-size:11.00px;line-height:11.00px;color:#1c1c1c;transform:scaleX(0.9920);">B737-700</span>
<span style="left:441.80px;top:391.01px;font-size:11.00px;line-height:11.00px;color:#1c1c1c;transform:scaleX(0.9920);">374</span>
<span style="left:28.50px;top:407.47px;font-size:11.00px;line-height:11.00px;color:#1c1c1c;transform:scaleX(0.9920);">4314</span>
<span style="left:73.60px;top:407.47px;font-size:11.00px;line-height:11.00px;color:#1c1c1c;transform:scaleX(0.9920);">202301-LM0007</span>
<span style="left:291.80px;top:407.47px;font-size:11.00px;line-height:11.00px;color:#1c1c1c;transform:scaleX(0.9920);">RA-00002</span>
<span style="left:359.20px;top:407.47px;font-size:11.00px;line-height:11.00px;color:#1c1c1c;transform:scaleX(0.9920);">B737-800</span>
<span style="left:441.80px;top:407.47px;font-size:11.00px;line-height:11.00px;color:#1c1c1c;transform:scaleX(0.9920);">326</span>
<span style="left:28.50px;top:423.92px;font-size:11.00px;line-height:11.00px;color:#1c1c1c;transform:scaleX(0.9920);">4312</span>
<span style="left:73.60px;top:423.92px;font-size:11.00px;line-height:11.00px;color:#1c1c1c;transform:scaleX(0.9920);">202301-LM0005</span>
<span style="left:291.80px;top:423.92px;font-size:11.00px;line-height:11.00px;color:#1c1c1c;transform:scaleX(0.9920);">RA-00002</span>
<span style="left:359.20px;top:423.92px;font-size:11.00px;line-height:11.00px;color:#1c1c1c;transform:scaleX(0.9920);">B737-800</span>
<span style="left:441.80px;top:423.92px;font-size:11.00px;line-height:11.00px;color:#1c1c1c;transform:scaleX(0.9920);">326</span>
<span style="left:28.50px;top:440.38px;font-size:11.00px;line-height:11.00px;color:#1c1c1c;transform:scaleX(0.9920);">4294</span>
<span style="left:73.60px;top:440.38px;font-size:11.00px;line-height:11.00px;color:#1c1c1c;transform:scaleX(0.9920);">202301-LM0003</span>
<span style="left:291.80px;top:440.38px;font-size:11.00px;line-height:11.00px;color:#1c1c1c;transform:scaleX(0.9920);">RA-00001</span>
<span style="left:359.20px;top:440.38px;font-size:11.00px;line-height:11.00px;color:#1c1c1c;transform:scaleX(0.9920);">B737-800</span>
<span style="left:441.80px;top:440.38px;font-size:11.00px;line-height:11.00px;color:#1c1c1c;transform:scaleX(0.9920);">326</span>
<span style="left:28.50px;top:456.83px;font-size:11.00px;line-height:11.00px;color:#1c1c1c;transform:scaleX(0.9920);">4293</span>
<span style="left:73.60px;top:456.83px;font-size:11.00px;line-height:11.00px;color:#1c1c1c;transform:scaleX(0.9920);">202301-LM0002</span>
<span style="left:291.80px;top:456.83px;font-size:11.00px;line-height:11.00px;color:#1c1c1c;transform:scaleX(0.9920);">RA-77777</span>
<span style="left:359.20px;top:456.83px;font-size:11.00px;line-height:11.00px;color:#1c1c1c;transform:scaleX(0.9920);">B737-800</span>
<span style="left:441.80px;top:456.83px;font-size:11.00px;line-height:11.00px;color:#1c1c1c;transform:scaleX(0.9920);">326</span>
<span style="left:28.50px;top:473.29px;font-size:11.00px;line-height:11.00px;color:#1c1c1c;transform:scaleX(0.9920);">4292</span>
<span style="left:73.60px;top:473.29px;font-size:11.00px;line-height:11.00px;color:#1c1c1c;transform:scaleX(0.9920);">202301-LM0001</span>
<span style="left:291.80px;top:473.29px;font-size:11.00px;line-height:11.00px;color:#1c1c1c;transform:scaleX(0.9920);">RA-77777</span>
<span style="left:359.20px;top:473.29px;font-size:11.00px;line-height:11.00px;color:#1c1c1c;transform:scaleX(0.9920);">B737-800</span>
<span style="left:441.80px;top:473.29px;font-size:11.00px;line-height:11.00px;color:#1c1c1c;transform:scaleX(0.9920);">326</span>
<span style="left:28.50px;top:489.74px;font-size:11.00px;line-height:11.00px;color:#1c1c1c;transform:scaleX(0.9920);">4291</span>
<span style="left:73.60px;top:489.74px;font-size:11.00px;line-height:11.00px;color:#1c1c1c;transform:scaleX(0.9920);">202212-LM0009</span>
<span style="left:291.80px;top:489.74px;font-size:11.00px;line-height:11.00px;color:#1c1c1c;transform:scaleX(0.9920);">EI-GXO</span>
<span style="left:359.20px;top:489.74px;font-size:11.00px;line-height:11.00px;color:#1c1c1c;transform:scaleX(0.9920);">B737-800</span>
<span style="left:441.80px;top:489.74px;font-size:11.00px;line-height:11.00px;color:#1c1c1c;transform:scaleX(0.9920);">365</span>
<span style="left:28.50px;top:506.20px;font-size:11.00px;line-height:11.00px;color:#1c1c1c;transform:scaleX(0.9920);">4290</span>
<span style="left:73.60px;top:506.20px;font-size:11.00px;line-height:11.00px;color:#1c1c1c;transform:scaleX(0.9920);">202212-LM0008</span>
<span style="left:178.70px;top:506.20px;font-size:11.00px;line-height:11.00px;color:#1c1c1c;transform:scaleX(0.9920);">123-TEST-TASK</span>
<span style="left:291.80px;top:506.20px;font-size:11.00px;line-height:11.00px;color:#1c1c1c;transform:scaleX(0.9920);">RA-00003</span>
<span style="left:359.20px;top:506.20px;font-size:11.00px;line-height:11.00px;color:#1c1c1c;transform:scaleX(0.9920);">B737-800</span>
<span style="left:441.80px;top:506.20px;font-size:11.00px;line-height:11.00px;color:#1c1c1c;transform:scaleX(0.9920);">325</span>
<span style="left:28.50px;top:522.65px;font-size:11.00px;line-height:11.00px;color:#1c1c1c;transform:scaleX(0.9920);">4289</span>
<span style="left:73.60px;top:522.65px;font-size:11.00px;line-height:11.00px;color:#1c1c1c;transform:scaleX(0.9920);">202212-LM0007</span>
<span style="left:178.70px;top:522.65px;font-size:11.00px;line-height:11.00px;color:#1c1c1c;transform:scaleX(0.9920);">121231234</span>
<span style="left:291.80px;top:522.65px;font-size:11.00px;line-height:11.00px;color:#1c1c1c;transform:scaleX(0.9920);">RA-00002</span>
<span style="left:359.20px;top:522.65px;font-size:11.00px;line-height:11.00px;color:#1c1c1c;transform:scaleX(0.9920);">B737-800</span>
<span style="left:441.80px;top:522.65px;font-size:11.00px;line-height:11.00px;color:#1c1c1c;transform:scaleX(0.9920);">326</span>
<span style="left:28.50px;top:539.11px;font-size:11.00px;line-height:11.00px;color:#1c1c1c;transform:scaleX(0.9920);">4285</span>
<span style="left:73.60px;top:539.11px;font-size:11.00px;line-height:11.00px;color:#1c1c1c;transform:scaleX(0.9920);">202212-LM0004</span>
<span style="left:291.80px;top:539.11px;font-size:11.00px;line-height:11.00px;color:#1c1c1c;transform:scaleX(0.9920);">EI-GXO</span>
<span style="left:359.20px;top:539.11px;font-size:11.00px;line-height:11.00px;color:#1c1c1c;transform:scaleX(0.9920);">B737-800</span>
<span style="left:441.80px;top:539.11px;font-size:11.00px;line-height:11.00px;color:#1c1c1c;transform:scaleX(0.9920);">365</span>
<span style="left:28.50px;top:555.56px;font-size:11.00px;line-height:11.00px;color:#1c1c1c;transform:scaleX(0.9920);">4284</span>
<span style="left:73.60px;top:555.56px;font-size:11.00px;line-height:11.00px;color:#1c1c1c;transform:scaleX(0.9920);">202212-LM0003</span>
<span style="left:291.80px;top:555.56px;font-size:11.00px;line-height:11.00px;color:#1c1c1c;transform:scaleX(0.9920);">EI-GXO</span>
<span style="left:359.20px;top:555.56px;font-size:11.00px;line-height:11.00px;color:#1c1c1c;transform:scaleX(0.9920);">B737-800</span>
<span style="left:441.80px;top:555.56px;font-size:11.00px;line-height:11.00px;color:#1c1c1c;transform:scaleX(0.9920);">365</span>
<span style="left:28.50px;top:572.02px;font-size:11.00px;line-height:11.00px;color:#1c1c1c;transform:scaleX(0.9920);">3283</span>
<span style="left:73.60px;top:572.02px;font-size:11.00px;line-height:11.00px;color:#1c1c1c;transform:scaleX(0.9920);">202211-LM0002</span>
<span style="left:291.80px;top:572.02px;font-size:11.00px;line-height:11.00px;color:#1c1c1c;transform:scaleX(0.9920);">RA-00001</span>
<span style="left:359.20px;top:572.02px;font-size:11.00px;line-height:11.00px;color:#1c1c1c;transform:scaleX(0.9920);">B737-800</span>
<span style="left:441.80px;top:572.02px;font-size:11.00px;line-height:11.00px;color:#1c1c1c;transform:scaleX(0.9920);">326</span>
</div>
<div style="left:458.2px;top:126px;width:14px;height:451px;background:#ebe9e6;"></div>
<div style="left:27.5px;top:577px;width:430.7px;height:14px;background:#ebe9e6;"></div>
<div style="left:458.2px;top:577px;width:14px;height:14px;background:#d6d3ce;"></div>
<div style="left:458.2px;top:126px;width:13.5px;height:12.5px;background:#d6d3ce;border:1px solid;border-color:#fff #404040 #404040 #fff;box-shadow:inset -1px -1px 0 #808080;"></div>
<svg style="left:461.25px;top:130.05px" width="7" height="4" viewBox="0 0 7 4"><path d="M0 4h7l-3.5-4z" fill="#000"/></svg>
<div style="left:458.2px;top:138.8px;width:13.5px;height:13.8px;background:#d6d3ce;border:1px solid;border-color:#fff #404040 #404040 #fff;box-shadow:inset -1px -1px 0 #808080;"></div>
<div style="left:458.2px;top:563.7px;width:13.5px;height:13.3px;background:#d6d3ce;border:1px solid;border-color:#fff #404040 #404040 #fff;box-shadow:inset -1px -1px 0 #808080;"></div>
<svg style="left:461.25px;top:568.15px" width="7" height="4" viewBox="0 0 7 4"><path d="M0 0h7l-3.5 4z" fill="#000"/></svg>
<div style="left:27.5px;top:577px;width:13px;height:13.5px;background:#d6d3ce;border:1px solid;border-color:#fff #404040 #404040 #fff;box-shadow:inset -1px -1px 0 #808080;"></div>
<svg style="left:31.7px;top:580.05px" width="4" height="7" viewBox="0 0 4 7"><path d="M4 0v7l-4-3.5z" fill="#000"/></svg>
<div style="left:40.5px;top:577px;width:13.5px;height:13.5px;background:#d6d3ce;border:1px solid;border-color:#fff #404040 #404040 #fff;box-shadow:inset -1px -1px 0 #808080;"></div>
<div style="left:444.5px;top:577px;width:13.7px;height:13.5px;background:#d6d3ce;border:1px solid;border-color:#fff #404040 #404040 #fff;box-shadow:inset -1px -1px 0 #808080;"></div>
<svg style="left:449.05px;top:580.05px" width="4" height="7" viewBox="0 0 4 7"><path d="M0 0v7l4-3.5z" fill="#000"/></svg>
<div class="sk" style="left:23.7px;top:594.5px;width:174px;height:12.5px;"></div>
<span style="left:27.20px;top:597.07px;font-size:8.90px;line-height:8.90px;color:#202020;font-family:'DejaVu Sans Condensed','DejaVu Sans',sans-serif;transform:scaleX(1.0608);">Found 31 Work Orders</span>
<div class="et" style="left:484px;top:78px;width:685px;height:560px;"></div>
<div style="left:483px;top:78px;width:1px;height:551px;background:#8a8884;"></div>
<div style="left:490px;top:77px;width:74px;height:3px;background:#d6d3ce;"></div>
<span style="left:492.00px;top:70.60px;font-size:14.30px;line-height:14.30px;color:#000080;font-weight:bold;transform:scaleX(0.9442);">WO Editor:</span>
<span style="left:529.50px;top:142.15px;font-size:14.00px;line-height:14.00px;color:#2828c8;transform:scaleX(0.9229);">Select:</span>
<span style="left:658.00px;top:142.15px;font-size:14.00px;line-height:14.00px;color:#444444;transform:scaleX(0.9507);">A/C Reg:</span>
<span style="left:780.00px;top:142.15px;font-size:14.00px;line-height:14.00px;color:#444444;transform:scaleX(0.9360);">A/C Type:</span>
<span style="left:908.60px;top:142.15px;font-size:14.00px;line-height:14.00px;color:#444444;transform:scaleX(0.9538);">A/C Serial No:</span>
<span style="left:1059.00px;top:142.15px;font-size:14.00px;line-height:14.00px;color:#444444;transform:scaleX(0.9182);">Authority:</span>
<span style="left:730.80px;top:142.49px;font-size:13.60px;line-height:13.60px;color:#e02020;">*</span>
<span style="left:849.40px;top:142.49px;font-size:13.60px;line-height:13.60px;color:#e02020;">*</span>
<span style="left:1002.40px;top:142.49px;font-size:13.60px;line-height:13.60px;color:#e02020;">*</span>
<span style="left:1132.00px;top:142.49px;font-size:13.60px;line-height:13.60px;color:#e02020;">*</span>
<div style="left:496px;top:87px;width:498px;height:58.5px;background:#d6d3ce;border:1px solid;border-color:#fbfbfa #96948f #96948f #fbfbfa;"></div>
<div style="left:497px;top:110px;width:495px;height:2px;border-top:1px solid #b4b2ac;border-bottom:1px solid #f2f1ee;"></div>
<div style="left:499px;top:89.7px;width:2px;height:15.5px;border-left:1px solid #9c9a94;border-right:1px solid #f4f3f0;"></div>
<div style="left:562.3px;top:89.7px;width:2px;height:15.5px;border-left:1px solid #9c9a94;border-right:1px solid #f4f3f0;"></div>
<div style="left:569.2px;top:89.7px;width:2px;height:15.5px;border-left:1px solid #9c9a94;border-right:1px solid #f4f3f0;"></div>
<div style="left:633px;top:89.7px;width:2px;height:15.5px;border-left:1px solid #9c9a94;border-right:1px solid #f4f3f0;"></div>
<div style="left:696.3px;top:89.7px;width:2px;height:15.5px;border-left:1px solid #9c9a94;border-right:1px solid #f4f3f0;"></div>
<div style="left:703px;top:89.7px;width:2px;height:15.5px;border-left:1px solid #9c9a94;border-right:1px solid #f4f3f0;"></div>
<div style="left:766.5px;top:89.7px;width:2px;height:15.5px;border-left:1px solid #9c9a94;border-right:1px solid #f4f3f0;"></div>
<div style="left:829.2px;top:89.7px;width:2px;height:15.5px;border-left:1px solid #9c9a94;border-right:1px solid #f4f3f0;"></div>
<div style="left:892px;top:89.7px;width:2px;height:15.5px;border-left:1px solid #9c9a94;border-right:1px solid #f4f3f0;"></div>
<div style="left:955px;top:89.7px;width:2px;height:15.5px;border-left:1px solid #9c9a94;border-right:1px solid #f4f3f0;"></div>
<span style="left:523.80px;top:93.97px;font-size:8.90px;line-height:8.90px;color:#000;font-family:'DejaVu Sans Condensed','DejaVu Sans',sans-serif;transform:scaleX(1.0869);">Refresh</span>
<span style="left:610.80px;top:93.97px;font-size:8.90px;line-height:8.90px;color:#000;font-family:'DejaVu Sans Condensed','DejaVu Sans',sans-serif;transform:scaleX(1.0330);">Add</span>
<span style="left:660.00px;top:93.97px;font-size:8.90px;line-height:8.90px;color:#8e8c8a;font-family:'DejaVu Sans Condensed','DejaVu Sans',sans-serif;transform:scaleX(1.0344);text-shadow:0.8px 0.8px 0 #f8f8f6;">Update</span>
<span style="left:734.00px;top:93.97px;font-size:8.90px;line-height:8.90px;color:#8e8c8a;font-family:'DejaVu Sans Condensed','DejaVu Sans',sans-serif;transform:scaleX(0.9881);text-shadow:0.8px 0.8px 0 #f8f8f6;">Delete</span>
<span style="left:800.70px;top:93.97px;font-size:8.90px;line-height:8.90px;color:#8e8c8a;font-family:'DejaVu Sans Condensed','DejaVu Sans',sans-serif;transform:scaleX(1.0314);text-shadow:0.8px 0.8px 0 #f8f8f6;">Close</span>
<span style="left:864.00px;top:93.97px;font-size:8.90px;line-height:8.90px;color:#8e8c8a;font-family:'DejaVu Sans Condensed','DejaVu Sans',sans-serif;transform:scaleX(1.0285);text-shadow:0.8px 0.8px 0 #f8f8f6;">Open</span>
<span style="left:918.70px;top:93.97px;font-size:8.90px;line-height:8.90px;color:#8e8c8a;font-family:'DejaVu Sans Condensed','DejaVu Sans',sans-serif;transform:scaleX(1.0372);text-shadow:0.8px 0.8px 0 #f8f8f6;">A Stock</span>
<svg style="left:508px;top:91px" width="14" height="14" viewBox="508 91 14 14"><path d="M513 94.300h3.800a2.700 2.700 0 0 1 0 5.600h-3.400" fill="none" stroke="#0c700c" stroke-width="3.300"/><path d="M513 94.300h3.800a2.700 2.700 0 0 1 0 5.600h-3.400" fill="none" stroke="#38d838" stroke-width="1.500"/><path d="M513.600 91.900l-3.600 2.500 3.600 2.500z" fill="#28c028" stroke="#0c700c" stroke-width=".8"/></svg>
<svg style="left:577px;top:89px" width="17" height="17" viewBox="577 89 17 17"><path d="M581.500 95l2.500-3h5.500v10.500h-8z" fill="#40e0e0" stroke="#181818" stroke-width="1"/><path d="M581.500 95h2.500v-3" fill="#d8ffff" stroke="#181818" stroke-width=".8"/><path d="M579.300 91.300l1 1M591.700 91.300l-1 1M579.300 104l1-1M591.700 104l-1-1M585.500 90v.9M578.500 97.500h1M591.500 97.500h1M585.500 103.500v.9" stroke="#202020" stroke-width="1"/></svg>
<svg style="left:641px;top:90.500px" width="15" height="15" viewBox="0 0 15 15"><rect x="1" y="1.500" width="4.500" height="5" fill="#909090"/><path d="M7 3.500h4v3M9.500 5l1.500 1.800 1.500-1.800" fill="none" stroke="#909090" stroke-width="1.200"/><rect x="5.500" y="9" width="7.500" height="4.500" fill="#e8e8e8" stroke="#909090" stroke-width="1.100"/><path d="M7 11.300h4.500" stroke="#909090" stroke-width="1"/></svg>
<svg style="left:711px;top:91px" width="15" height="14" viewBox="0 0 15 14"><rect x=".3" y=".3" width="14" height="13.200" fill="#8c8c8c"/><path d="M4.500 5v8" stroke="#f0f0f0" stroke-width="1.400"/><rect x="3.800" y="2.200" width="1.500" height="1.500" fill="#f0f0f0"/></svg>
<svg style="left:774px;top:90.500px" width="15" height="15" viewBox="0 0 15 15"><path d="M7.500 .5v14M1 5.500h13M2 1.500l11 12M13 1.500l-11 12" stroke="#8a8886" stroke-width="1.350" fill="none"/></svg>
<svg style="left:837px;top:90.500px" width="15" height="15" viewBox="0 0 15 15"><path d="M6 .8v11.500M9 .8v8M1 5.500h13M3.500 7.500h8" stroke="#8a8886" stroke-width="1.350" fill="none"/><path d="M6 14.200l-2.200-3h5z" fill="#8c8c8c"/></svg>
<svg style="left:900px;top:91px" width="16" height="14" viewBox="0 0 16 14"><circle cx="10" cy="6.500" r="4.800" fill="#909090"/><circle cx="8.700" cy="5.200" r="1.500" fill="#d8d8d8"/><rect x="1" y="8" width="3.200" height="3.200" fill="#909090"/><path d="M4.500 11.500h8" stroke="#909090" stroke-width="1.500"/></svg>
<div style="left:500.7px;top:117px;width:10px;height:1.5px;background:#2020a0;"></div>
<div style="left:496.3px;top:121.7px;width:10.5px;height:11px;background:#fff;border:1px solid;border-color:#606060 #f4f4f4 #f4f4f4 #606060;"></div>
<svg style="left:497.6px;top:123.2px" width="8" height="8" viewBox="0 0 8 8"><path d="M1 3.500l2 2.300 4-4.300" stroke="#000" stroke-width="1.700" fill="none"/></svg>
<span style="left:512.30px;top:119.65px;font-size:14.00px;line-height:14.00px;color:#4a4a4a;transform:scaleX(0.9598);">:Activate WO</span>
<div style="left:802px;top:114px;width:179px;height:23px;background:#ffffc0;border:1px solid;border-color:#404040 #808080 #808080 #404040;"></div>
<div style="left:997px;top:87px;width:167px;height:27px;background:#ececf3;border:1px solid #303030;"></div>
<span style="left:1018.50px;top:92.66px;font-size:16.00px;line-height:16.00px;color:#0404b0;font-weight:bold;transform:scaleX(1.0561);">202403-LM0002</span>
<div style="left:496.5px;top:158px;width:118px;height:23px;background:#c6c3c8;border:1px solid;border-color:#606060 #f4f4f4 #f4f4f4 #606060;"></div>
<div style="left:497.5px;top:159px;width:116px;height:21px;border:1px solid;border-color:#404040 #d6d3ce #d6d3ce #404040;"></div>
<div style="left:599.5px;top:160px;width:13px;height:19px;background:#d6d3ce;border:1px solid;border-color:#fff #404040 #404040 #fff;box-shadow:inset -1px -1px 0 #808080;"></div>
<svg style="left:602.5px;top:168px" width="7" height="4" viewBox="0 0 7 4"><path d="M0 0h7l-3.5 4z" fill="#000"/></svg>
<span style="left:499.00px;top:161.64px;font-size:14.60px;line-height:14.60px;color:#000;-webkit-text-stroke:.3px #000;transform:scaleX(0.9400);">RA-00002</span>
<div style="left:626px;top:158px;width:119px;height:23px;background:#fff;border:1px solid;border-color:#404040 #808080 #808080 #404040;"></div>
<span style="left:654.45px;top:160.45px;font-size:14.00px;line-height:14.00px;color:#0404b0;font-weight:bold;transform:scaleX(0.9731);">RA-00002</span>
<div style="left:750px;top:158px;width:131px;height:23px;background:#fff;border:1px solid;border-color:#404040 #808080 #808080 #404040;"></div>
<span style="left:785.30px;top:160.45px;font-size:14.00px;line-height:14.00px;color:#0404b0;font-weight:bold;transform:scaleX(0.9823);">B737-800</span>
<div style="left:886px;top:158px;width:131px;height:23px;background:#fff;border:1px solid;border-color:#404040 #808080 #808080 #404040;"></div>
<span style="left:932.05px;top:160.45px;font-size:14.00px;line-height:14.00px;color:#0404b0;font-weight:bold;">32658</span>
<div style="left:1026px;top:158px;width:131.5px;height:23.5px;background:#fff;border:1px solid;border-color:#606060 #f4f4f4 #f4f4f4 #606060;"></div>
<div style="left:1027px;top:159px;width:129.5px;height:21.5px;border:1px solid;border-color:#404040 #d6d3ce #d6d3ce #404040;"></div>
<div style="left:1142.5px;top:160px;width:13px;height:19.5px;background:#d6d3ce;border:1px solid;border-color:#fff #404040 #404040 #fff;box-shadow:inset -1px -1px 0 #808080;"></div>
<svg style="left:1145.5px;top:168.25px" width="7" height="4" viewBox="0 0 7 4"><path d="M0 0h7l-3.5 4z" fill="#000"/></svg>
<span style="left:1030.00px;top:161.65px;font-size:14.00px;line-height:14.00px;color:#0404b0;font-weight:bold;transform:scaleX(0.9667);">EASA</span>
<div class="et" style="left:496px;top:192px;width:662px;height:135px;"></div>
<div style="left:502px;top:191px;width:58.5px;height:4px;background:#d6d3ce;"></div>
<span style="left:504.00px;top:186.73px;font-size:11.30px;line-height:11.30px;color:#000080;font-weight:bold;transform:scaleX(0.9734);">Customer:</span>
<span style="left:519.00px;top:203.15px;font-size:14.00px;line-height:14.00px;color:#444444;transform:scaleX(0.9593);">Customer Name:</span>
<span style="left:648.70px;top:203.79px;font-size:13.60px;line-height:13.60px;color:#e02020;">*</span>
<span style="left:962.70px;top:203.15px;font-size:14.00px;line-height:14.00px;color:#444444;transform:scaleX(0.9519);">Customer WO Reference:</span>
<span style="left:1139.70px;top:203.79px;font-size:13.60px;line-height:13.60px;color:#e02020;">*</span>
<div style="left:508px;top:221px;width:414px;height:20.5px;background:#fff;border:1px solid;border-color:#404040 #808080 #808080 #404040;"></div>
<span style="left:510.00px;top:223.15px;font-size:14.00px;line-height:14.00px;color:#0404b0;font-weight:bold;transform:scaleX(0.9760);">AIR Bulgaria</span>
<div style="left:933px;top:221px;width:213.5px;height:20.5px;background:#fff;border:1px solid;border-color:#404040 #808080 #808080 #404040;"></div>
<span style="left:991.35px;top:223.15px;font-size:14.00px;line-height:14.00px;color:#0404b0;font-weight:bold;transform:scaleX(0.9717);">AB-01022020-1</span>
<span style="left:519.00px;top:248.95px;font-size:14.00px;line-height:14.00px;color:#444444;transform:scaleX(0.9639);">Customer Contact Details:</span>
<div style="left:508px;top:265px;width:625px;height:56px;background:#fff;border:1px solid;border-color:#3a3a3a #101010 #101010 #484644;"></div>
<div style="left:1133px;top:265px;width:14px;height:56px;background:#ebe9e6;"></div>
<div style="left:1133px;top:265px;width:14px;height:13px;background:#dcd9d2;border:1px solid;border-color:#f8f8f6 #6a6864 #6a6864 #f8f8f6;"></div>
<svg style="left:1136.3px;top:269.3px" width="7" height="4" viewBox="0 0 7 4"><path d="M0 4h7l-3.5-4z" fill="#8a8884"/></svg>
<div style="left:1133px;top:308px;width:14px;height:13px;background:#dcd9d2;border:1px solid;border-color:#f8f8f6 #6a6864 #6a6864 #f8f8f6;"></div>
<svg style="left:1136.3px;top:312.3px" width="7" height="4" viewBox="0 0 7 4"><path d="M0 0h7l-3.5 4z" fill="#8a8884"/></svg>
<span style="left:510.00px;top:267.15px;font-size:14.00px;line-height:14.00px;color:#0404b0;font-weight:bold;transform:scaleX(0.9773);">Bulgaria, Jornal street,12</span>
<div class="et" style="left:496px;top:342px;width:662px;height:109px;"></div>
<div style="left:502px;top:341px;width:104.5px;height:4px;background:#d6d3ce;"></div>
<span style="left:504.00px;top:337.51px;font-size:11.80px;line-height:11.80px;color:#000080;font-weight:bold;transform:scaleX(0.9630);">Action to be Done:</span>
<span style="left:507.80px;top:353.65px;font-size:14.00px;line-height:14.00px;color:#444444;transform:scaleX(0.9708);">Basic Work / Title:</span>
<span style="left:648.70px;top:353.99px;font-size:13.60px;line-height:13.60px;color:#e02020;">*</span>
<div style="left:508px;top:371px;width:625px;height:75px;background:#fff;border:1px solid;border-color:#3a3a3a #101010 #101010 #484644;"></div>
<div style="left:1133px;top:371px;width:14px;height:75px;background:#ebe9e6;"></div>
<div style="left:1133px;top:371px;width:14px;height:13px;background:#dcd9d2;border:1px solid;border-color:#f8f8f6 #6a6864 #6a6864 #f8f8f6;"></div>
<svg style="left:1136.3px;top:375.3px" width="7" height="4" viewBox="0 0 7 4"><path d="M0 4h7l-3.5-4z" fill="#8a8884"/></svg>
<div style="left:1133px;top:433px;width:14px;height:13px;background:#dcd9d2;border:1px solid;border-color:#f8f8f6 #6a6864 #6a6864 #f8f8f6;"></div>
<svg style="left:1136.3px;top:437.3px" width="7" height="4" viewBox="0 0 7 4"><path d="M0 0h7l-3.5 4z" fill="#8a8884"/></svg>
<span style="left:510.00px;top:373.65px;font-size:14.00px;line-height:14.00px;color:#0404b0;font-weight:bold;transform:scaleX(0.9817);">Perform wheel replacement after FL#AB1624</span>
<span style="left:528.60px;top:461.15px;font-size:14.00px;line-height:14.00px;color:#444444;transform:scaleX(0.9874);">STA:</span>
<span style="left:565.70px;top:461.49px;font-size:13.60px;line-height:13.60px;color:#e02020;">*</span>
<span style="left:626.00px;top:461.15px;font-size:14.00px;line-height:14.00px;color:#444444;transform:scaleX(0.9601);">WO Date:</span>
<span style="left:696.40px;top:461.49px;font-size:13.60px;line-height:13.60px;color:#e02020;">*</span>
<span style="left:777.50px;top:461.15px;font-size:14.00px;line-height:14.00px;color:#444444;transform:scaleX(0.9501);">Originator:</span>
<span style="left:849.70px;top:461.49px;font-size:13.60px;line-height:13.60px;color:#e02020;">*</span>
<div style="left:708px;top:454.7px;width:36.8px;height:21px;background:#c0c0ff;border:1px solid;border-color:#fff #404040 #404040 #fff;box-shadow:inset -1px -1px 0 #8080a0;"></div>
<svg style="left:719px;top:458px" width="15" height="13" viewBox="0 0 15 13"><rect x=".5" y=".5" width="14" height="12" fill="#fff" stroke="#404040"/><rect x=".5" y=".5" width="14" height="3" fill="#000080"/><path d="M3.500 4v8.500M6.300 4v8.500M9 4v8.500M11.800 4v8.500M1 6.300h13M1 8.600h13M1 10.800h13" stroke="#a04040" stroke-width=".9"/></svg>
<div style="left:496px;top:478px;width:106px;height:22.5px;background:#fff;border:1px solid;border-color:#606060 #f4f4f4 #f4f4f4 #606060;"></div>
<div style="left:497px;top:479px;width:104px;height:20.5px;border:1px solid;border-color:#404040 #d6d3ce #d6d3ce #404040;"></div>
<div style="left:587px;top:480px;width:13px;height:18.5px;background:#d6d3ce;border:1px solid;border-color:#fff #404040 #404040 #fff;box-shadow:inset -1px -1px 0 #808080;"></div>
<svg style="left:590px;top:487.75px" width="7" height="4" viewBox="0 0 7 4"><path d="M0 0h7l-3.5 4z" fill="#000"/></svg>
<span style="left:498.70px;top:481.45px;font-size:14.00px;line-height:14.00px;color:#0404b0;font-weight:bold;transform:scaleX(0.9451);">OSL</span>
<div style="left:614px;top:478px;width:131px;height:22.7px;background:#c6c3c8;border:1px solid;border-color:#303030;"></div>
<span style="left:639.00px;top:481.96px;font-size:16.00px;line-height:16.00px;color:#0404b0;font-weight:bold;transform:scaleX(1.0228);">11/03/2024</span>
<div style="left:756px;top:478px;width:106px;height:22.5px;background:#fff;border:1px solid;border-color:#606060 #f4f4f4 #f4f4f4 #606060;"></div>
<div style="left:757px;top:479px;width:104px;height:20.5px;border:1px solid;border-color:#404040 #d6d3ce #d6d3ce #404040;"></div>
<div style="left:847px;top:480px;width:13px;height:18.5px;background:#d6d3ce;border:1px solid;border-color:#fff #404040 #404040 #fff;box-shadow:inset -1px -1px 0 #808080;"></div>
<svg style="left:850px;top:487.75px" width="7" height="4" viewBox="0 0 7 4"><path d="M0 0h7l-3.5 4z" fill="#000"/></svg>
<div style="left:758px;top:480px;width:25.5px;height:17px;background:#0a246a;"></div>
<span style="left:759.80px;top:481.30px;font-size:14.30px;line-height:14.30px;color:#fff;transform:scaleX(0.9277);">TLT</span>
<div style="left:873px;top:477.4px;width:285px;height:23.3px;background:#c6c3c8;border:1px solid;border-color:#303030;"></div>
<span style="left:963.25px;top:481.96px;font-size:16.00px;line-height:16.00px;color:#0404b0;font-weight:bold;transform:scaleX(1.0254);">TALVAR TARI</span>
<span style="left:506.80px;top:513.95px;font-size:14.00px;line-height:14.00px;color:#444444;transform:scaleX(0.9516);">Remarks:</span>
<div style="left:496px;top:530px;width:649px;height:92px;background:#fff;border:1px solid;border-color:#303030 #101010 #101010 #484644;"></div>
<div style="left:1145px;top:530px;width:14px;height:92px;background:#ebe9e6;"></div>
<div style="left:1145px;top:530px;width:14px;height:13px;background:#dcd9d2;border:1px solid;border-color:#f8f8f6 #6a6864 #6a6864 #f8f8f6;"></div>
<svg style="left:1148.3px;top:534.3px" width="7" height="4" viewBox="0 0 7 4"><path d="M0 4h7l-3.5-4z" fill="#8a8884"/></svg>
<div style="left:1145px;top:609px;width:14px;height:13px;background:#dcd9d2;border:1px solid;border-color:#f8f8f6 #6a6864 #6a6864 #f8f8f6;"></div>
<svg style="left:1148.3px;top:613.3px" width="7" height="4" viewBox="0 0 7 4"><path d="M0 0h7l-3.5 4z" fill="#8a8884"/></svg>
<svg style="left:0;top:0" width="1179" height="629" viewBox="0 0 1179 629"><path d="M587.8 486.8L611.1 580.8L642.1 567.1z" fill="#0a9bff"/><circle cx="627.8" cy="576.7" r="17.200" fill="#fff" stroke="#2a2a2a" stroke-width="1.200"/><circle cx="627.8" cy="576.7" r="15.500" fill="#0a9bff"/></svg>
<span style="left:622.71px;top:569.00px;font-size:16.00px;line-height:16.00px;color:#fff;font-family:'DejaVu Sans','Liberation Sans',sans-serif;">8</span>
<svg style="left:0;top:0" width="1179" height="629" viewBox="0 0 1179 629"><path d="M712.8 490.7L743.4 582.2L773.1 565.9z" fill="#0a9bff"/><circle cx="759.7" cy="576.7" r="17.200" fill="#fff" stroke="#2a2a2a" stroke-width="1.200"/><circle cx="759.7" cy="576.7" r="15.500" fill="#0a9bff"/></svg>
<span style="left:754.61px;top:569.00px;font-size:16.00px;line-height:16.00px;color:#fff;font-family:'DejaVu Sans','Liberation Sans',sans-serif;">9</span>
<svg style="left:0;top:0" width="1179" height="629" viewBox="0 0 1179 629"><path d="M846.5 488.6L871.6 581.4L902.2 566.9z" fill="#0a9bff"/><circle cx="888.2" cy="576.9" r="17.200" fill="#fff" stroke="#2a2a2a" stroke-width="1.200"/><circle cx="888.2" cy="576.9" r="15.500" fill="#0a9bff"/></svg>
<span style="left:880.32px;top:571.22px;font-size:11.80px;line-height:11.80px;color:#fff;font-family:'DejaVu Sans','Liberation Sans',sans-serif;font-weight:bold;transform:scaleX(0.9600);">10</span>
<div style="left:0px;top:626px;width:1179px;height:3px;background:#fff;"></div>
<div style="left:0px;top:0px;width:1px;height:626px;background:#e4e8f4;"></div>
<div style="left:1177px;top:0px;width:2px;height:626px;background:#eef2fc;"></div>
</body></html>
